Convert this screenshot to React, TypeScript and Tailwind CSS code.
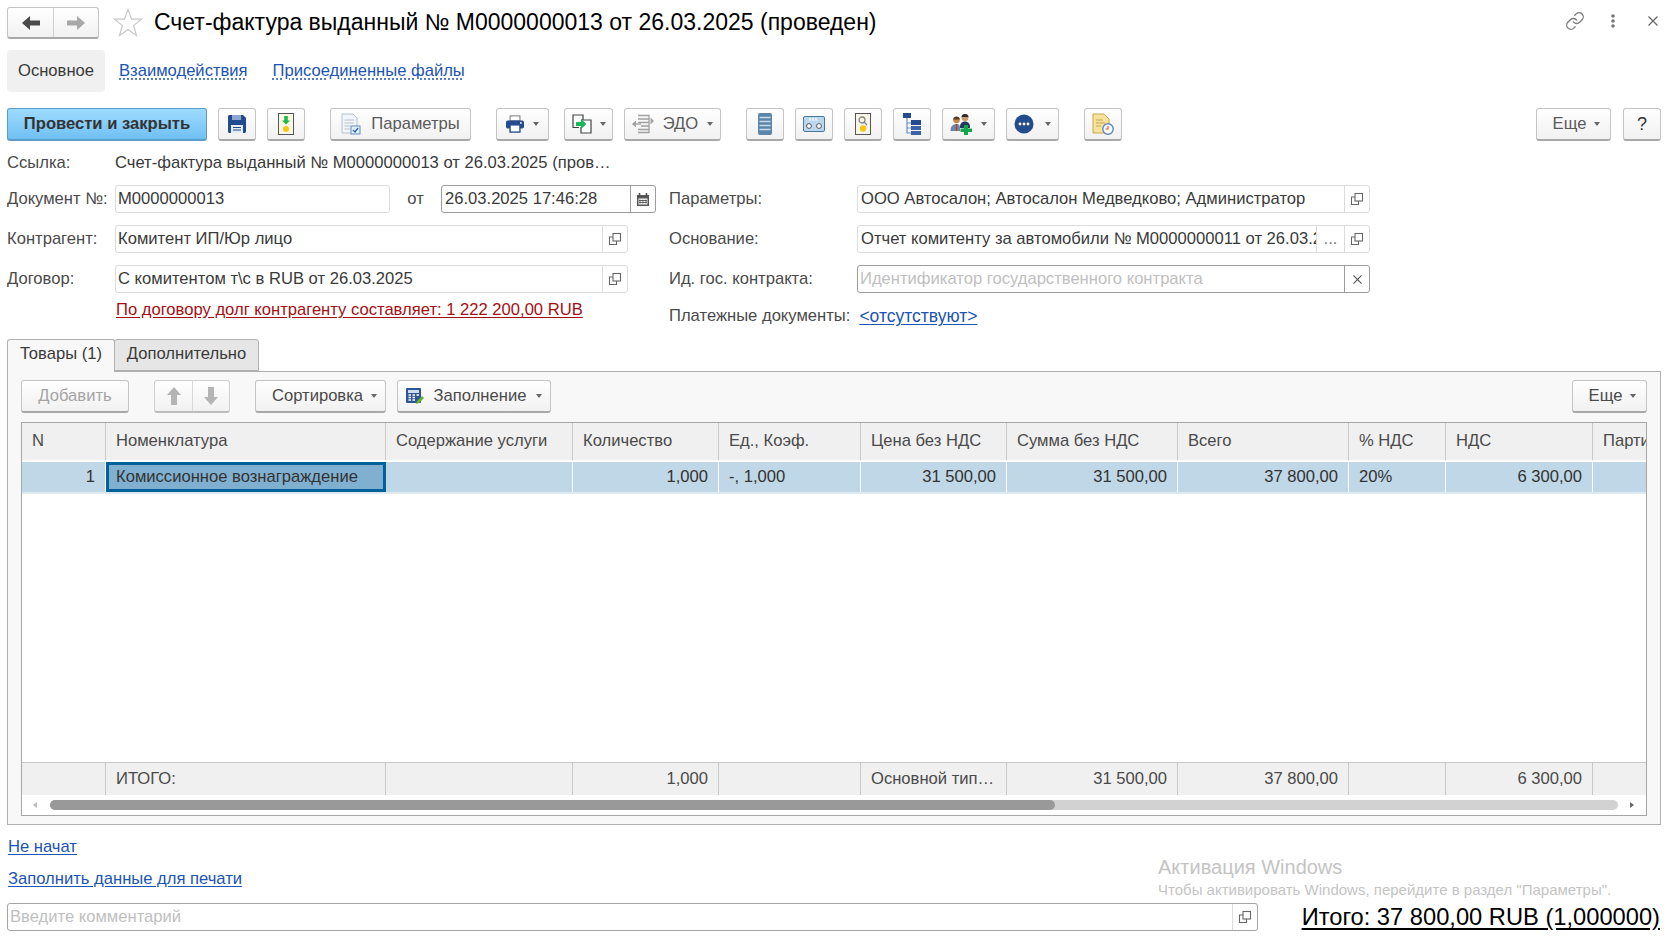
import React from "react";
import { Link as LinkIcon } from "lucide-react";

const Caret = () => (
  <svg viewBox="0 0 6 4" className="w-[6px] h-[4px] shrink-0">
    <path d="M0 0H6L3 4Z" fill="#666" />
  </svg>
);

const OpenIcon = () => (
  <svg viewBox="0 0 14 14" className="w-[14px] h-[14px]" fill="none" stroke="#666" strokeWidth="1.1">
    <rect x="5" y="1.5" width="7.5" height="7.5" />
    <path d="M5 5H1.5V12.5H8.5V9" />
  </svg>
);

const Btn = ({
  className = "",
  children,
  disabled,
}: {
  className?: string;
  children?: React.ReactNode;
  disabled?: boolean;
}) => (
  <div
    className={`h-[33px] shrink-0 flex items-center justify-center rounded-[3px] border border-[#c4c4c4] border-b-[#a8a8a8] border-b-2 bg-gradient-to-b from-white to-[#f1f1f1] ${
      disabled ? "text-[#a4a4a4]" : "text-[#4a4a4a]"
    } ${className}`}
  >
    {children}
  </div>
);

const Field = ({
  className = "",
  value,
  placeholder,
  focus,
  tight,
  children,
}: {
  className?: string;
  value?: string;
  placeholder?: string;
  focus?: boolean;
  tight?: boolean;
  children?: React.ReactNode;
}) => (
  <div
    className={`h-[28px] flex items-stretch rounded-[3px] border bg-white ${
      focus ? "border-[#9c9c9c]" : "border-[#dcdcdc]"
    } ${className}`}
  >
    <div
      className={`flex-1 min-w-0 leading-[26px] whitespace-nowrap overflow-hidden ${tight ? "px-[2px]" : "px-[3px]"} ${
        value ? "text-[#3a3a3a]" : "text-[#c0c0c0]"
      }`}
    >
      {value || placeholder}
    </div>
    {children}
  </div>
);

const FieldBtn = ({
  focus,
  className = "w-[25px]",
  children,
}: {
  focus?: boolean;
  className?: string;
  children: React.ReactNode;
}) => (
  <div
    className={`shrink-0 flex items-center justify-center border-l ${className} ${
      focus ? "border-[#9c9c9c]" : "border-[#dcdcdc]"
    }`}
  >
    {children}
  </div>
);

const Label = ({ className = "", children }: { className?: string; children: React.ReactNode }) => (
  <div className={`shrink-0 text-[#4a4a4a] whitespace-nowrap ${className}`}>{children}</div>
);

const Cell = ({
  w,
  children,
  right,
  divider,
}: {
  w: string;
  children?: React.ReactNode;
  right?: boolean;
  divider: string;
}) => (
  <div
    className={`${w} shrink-0 h-full flex items-center px-[10px] border-r whitespace-nowrap overflow-hidden ${divider} ${
      right ? "justify-end" : ""
    }`}
  >
    {children}
  </div>
);

const widths = [
  "w-[84px]",
  "w-[280px]",
  "w-[187px]",
  "w-[146px]",
  "w-[142px]",
  "w-[146px]",
  "w-[171px]",
  "w-[171px]",
  "w-[97px]",
  "w-[147px]",
  "w-[60px]",
];

export default function App() {
  return (
    <div className="w-[1671px] h-[943px] relative overflow-hidden bg-white px-[7px] font-['Liberation_Sans',Arial,sans-serif] text-[16.6px] text-[#4a4a4a]">
      {/* шапка */}
      <div className="h-[50px] flex items-start pt-[7px] pr-[6px]">
        <div className="w-[92px] h-[32px] flex rounded-[3px] border border-[#c4c4c4] border-b-2 border-b-[#a8a8a8] bg-gradient-to-b from-white to-[#f1f1f1]">
          <div className="w-[46px] flex items-center justify-center border-r border-[#cfcfcf]">
            <svg viewBox="0 0 18 14" className="w-[18px] h-[14px]">
              <path d="M0 7L8 0V4.5H18V9.5H8V14Z" fill="#4a4a4a" />
            </svg>
          </div>
          <div className="flex-1 flex items-center justify-center">
            <svg viewBox="0 0 18 14" className="w-[18px] h-[14px]">
              <path d="M18 7L10 0V4.5H0V9.5H10V14Z" fill="#a8a8a8" />
            </svg>
          </div>
        </div>
        <svg viewBox="0 0 30 30" className="w-[30px] h-[30px] ml-[14px] mt-[1px]" fill="#fff" stroke="#c8c8c8" strokeWidth="1.2">
          <path d="M15 1.5L18.6 11.2H28.6L20.6 17.4L23.5 27.5L15 21.6L6.5 27.5L9.4 17.4L1.4 11.2H11.4Z" />
        </svg>
        <div className="ml-[11px] text-[23px] leading-[30px] text-black whitespace-nowrap">
          Счет-фактура выданный № М0000000013 от 26.03.2025 (проведен)
        </div>
        <div className="ml-auto flex items-center pt-[4px]">
          <LinkIcon className="w-[20px] h-[20px] text-[#7c7c7c]" strokeWidth={1.6} />
          <svg viewBox="0 0 4 14" className="w-[4px] h-[14px] ml-[26px]" fill="#777">
            <circle cx="2" cy="2" r="1.8" />
            <circle cx="2" cy="7" r="1.8" />
            <circle cx="2" cy="12" r="1.8" />
          </svg>
          <svg viewBox="0 0 10 10" className="w-[10px] h-[10px] ml-[33px]" stroke="#666" strokeWidth="1.2">
            <path d="M0.5 0.5L9.5 9.5M9.5 0.5L0.5 9.5" />
          </svg>
        </div>
      </div>

      {/* разделы */}
      <div className="h-[42px] flex items-center">
        <div className="w-[98px] h-full pt-[1px] flex items-center justify-center rounded-[4px] bg-[#f0f0f0] text-[#3a3a3a]">
          Основное
        </div>
        <div className="ml-[14px] mt-[1px] text-[#1b54b5] underline decoration-dotted underline-offset-[3px]">Взаимодействия</div>
        <div className="ml-[25px] mt-[1px] text-[#1b54b5] underline decoration-dotted underline-offset-[3px]">Присоединенные файлы</div>
      </div>

      {/* командная панель */}
      <div className="mt-[16px] flex items-start">
        <div className="w-[200px] h-[33px] flex items-center justify-center rounded-[3px] border border-[#5b9cc8] border-b-2 bg-gradient-to-b from-[#9edbff] to-[#6fc0f2] font-bold text-[#333]">
          Провести и закрыть
        </div>
        <Btn className="w-[38px] ml-[11px]">
          <svg viewBox="0 0 18 18" className="w-[18px] h-[18px]">
            <path d="M0 1.5C0 .7.7 0 1.5 0H15L18 3V16.5C18 17.3 17.3 18 16.5 18H1.5C.7 18 0 17.3 0 16.5Z" fill="#234b8f" />
            <rect x="4" y="0" width="9" height="5" fill="#8fa8cf" />
            <rect x="3" y="10" width="12" height="8" fill="#e6ecf5" />
            <path d="M5 12.5H13M5 15H13" stroke="#234b8f" strokeWidth="1" />
          </svg>
        </Btn>
        <Btn className="w-[38px] ml-[11px]">
          <svg viewBox="0 0 16 22" className="w-[16px] h-[22px]">
            <rect x=".5" y=".5" width="15" height="21" fill="#fbf8e4" stroke="#555" />
            <path d="M6.2 3H9.8V7.5H12L8 11.5L4 7.5H6.2Z" fill="#1fb84a" />
            <circle cx="8" cy="16" r="3" fill="#f7c513" />
          </svg>
        </Btn>
        <Btn className="w-[141px] ml-[25px] gap-[10px] text-[#5a5a5a]">
          <svg viewBox="0 0 20 22" className="w-[20px] h-[22px]">
            <path d="M1 1H12L16 5V20H1Z" fill="#f2f5f9" stroke="#b4c0cd" />
            <path d="M3.5 7H13M3.5 10H13M3.5 13H9M3.5 16H9" stroke="#b4c0cd" />
            <rect x="10" y="13" width="9" height="8" fill="#e3eef9" stroke="#5f8fc2" />
            <path d="M12 17L14 19L17 15" fill="none" stroke="#2a67b0" strokeWidth="1.4" />
          </svg>
          <span>Параметры</span>
        </Btn>
        <Btn className="w-[53px] ml-[25px] gap-[9px]">
          <svg viewBox="0 0 20 20" className="w-[18px] h-[18px]">
            <rect x="4.5" y="1" width="11" height="5.5" fill="#fff" stroke="#6d6d6d" />
            <rect x="0" y="6" width="20" height="9" rx="2" fill="#234b8f" />
            <rect x="4.5" y="11" width="11" height="8" fill="#fff" stroke="#234b8f" strokeWidth="1.5" />
            <circle cx="16.5" cy="8.8" r="1" fill="#fff" />
          </svg>
          <Caret />
        </Btn>
        <Btn className="w-[49px] ml-[15px] gap-[8px]">
          <svg viewBox="0 0 20 20" className="w-[20px] h-[20px]">
            <path d="M7 13.5H1V1H11V6" fill="none" stroke="#444" strokeWidth="1.2" />
            <path d="M9 6H19V19H9V13" fill="#fff" stroke="#444" strokeWidth="1.2" />
            <path d="M4 8H9V5L14.5 10L9 15V12H4Z" fill="#17b85a" />
          </svg>
          <Caret />
        </Btn>
        <Btn className="w-[97px] ml-[11px] gap-[9px] text-[#5a5a5a]">
          <svg viewBox="0 0 22 20" className="w-[22px] h-[20px]" fill="none" stroke="#a0a0a0" strokeWidth="1.3">
            <path d="M6 1.5H17V18.5H6" />
            <path d="M6 5H17M6 8.5H17M9 12H17M6 15.5H17" />
            <path d="M0 10L4 6.5V13.5Z" fill="#a0a0a0" stroke="none" />
            <path d="M4 10H9" />
            <path d="M22 7L18.5 3.5V10.5Z" fill="#a0a0a0" stroke="none" />
          </svg>
          <span>ЭДО</span>
          <Caret />
        </Btn>
        <Btn className="w-[38px] ml-[25px]">
          <svg viewBox="0 0 14 22" className="w-[14px] h-[22px]">
            <rect x="0" y="0" width="14" height="22" rx="2" fill="#5b86a8" />
            <path d="M1.5 4.5H12.5M1.5 8.5H12.5M1.5 12.5H12.5M1.5 16.5H12.5" stroke="#c9dcea" strokeWidth="1.6" />
          </svg>
        </Btn>
        <Btn className="w-[38px] ml-[11px]">
          <svg viewBox="0 0 22 16" className="w-[22px] h-[16px]">
            <rect x=".5" y=".5" width="21" height="15" rx="1.5" fill="#bcd8ef" stroke="#4d7796" />
            <circle cx="6" cy="10" r="2.4" fill="#fff" stroke="#555" />
            <circle cx="16" cy="10" r="2.4" fill="#fff" stroke="#555" />
            <path d="M7 2V5M10 2V5M13 2V5" stroke="#fff" strokeWidth="1.2" />
          </svg>
        </Btn>
        <Btn className="w-[38px] ml-[11px]">
          <svg viewBox="0 0 16 22" className="w-[16px] h-[22px]">
            <rect x=".5" y=".5" width="15" height="21" fill="#f7f5ea" stroke="#555" />
            <circle cx="7" cy="7" r="3" fill="none" stroke="#888" strokeWidth="1.3" />
            <path d="M9 9L12 12" stroke="#888" strokeWidth="1.3" />
            <circle cx="8" cy="15.5" r="3.2" fill="#f7c513" />
          </svg>
        </Btn>
        <Btn className="w-[38px] ml-[11px]">
          <svg viewBox="0 0 18 22" className="w-[18px] h-[22px]">
            <rect x="0" y="0" width="8" height="5" fill="#234b8f" />
            <path d="M4 5V20H8M4 10H8M4 15H8" fill="none" stroke="#6d8fc0" strokeWidth="1.2" />
            <rect x="8" y="7" width="10" height="5" fill="#234b8f" />
            <rect x="8" y="13" width="10" height="4" fill="#3b63a6" />
            <rect x="8" y="18" width="10" height="4" fill="#3b63a6" />
          </svg>
        </Btn>
        <Btn className="w-[53px] ml-[11px] gap-[7px]">
          <svg viewBox="0 0 24 22" className="w-[24px] h-[22px]">
            <circle cx="6.5" cy="7" r="3.3" fill="#c68a4a" />
            <path d="M3.2 6.5C3.2 4.5 5 3.4 6.5 3.4S9.8 4.5 9.8 6.5Z" fill="#5a3a20" />
            <path d="M0.5 18C0.5 13 3 11 6.5 11S10 13 10 18Z" fill="#6d86a8" />
            <path d="M6.5 11V18" stroke="#c0392b" strokeWidth="1.2" />
            <circle cx="15" cy="4.5" r="3.5" fill="#c99a6a" />
            <path d="M11.5 4C11.5 2 13.2 1 15 1S18.5 2 18.5 4Z" fill="#2b2b2b" />
            <path d="M10 14C10 10 12.5 8.5 15 8.5S20 10 20 14V15H10Z" fill="#25395c" />
            <path d="M14 12H18V15.5H22V19H18V22H14V19H10.5V15.5H14Z" fill="#12a64d" />
          </svg>
          <Caret />
        </Btn>
        <Btn className="w-[53px] ml-[11px] gap-[11px]">
          <svg viewBox="0 0 20 20" className="w-[20px] h-[20px]">
            <circle cx="10" cy="10" r="9.5" fill="#234b8f" />
            <circle cx="6" cy="10" r="1.4" fill="#fff" />
            <circle cx="10" cy="10" r="1.4" fill="#fff" />
            <circle cx="14" cy="10" r="1.4" fill="#fff" />
          </svg>
          <Caret />
        </Btn>
        <Btn className="w-[38px] ml-[25px]">
          <svg viewBox="0 0 22 22" className="w-[22px] h-[22px]">
            <path d="M1 1H12L17 6V20H1Z" fill="#f6e29a" stroke="#c7a84e" />
            <path d="M4 7H11M4 10H13M4 13H9" stroke="#c7a84e" />
            <circle cx="16" cy="16" r="5.2" fill="#fff" stroke="#5d87b8" strokeWidth="1.4" />
            <path d="M16 13V16H13.5" fill="none" stroke="#d8574a" strokeWidth="1.2" />
          </svg>
        </Btn>
        <Btn className="w-[75px] ml-auto gap-[8px] pl-[6px] text-[#5a5a5a]">
          <span>Еще</span>
          <Caret />
        </Btn>
        <Btn className="w-[38px] ml-[12px] mr-[3px] text-[18px] text-[#333]">?</Btn>
      </div>

      {/* реквизиты */}
      <div className="mt-[11px] h-[22px] flex items-center">
        <Label className="w-[108px]">Ссылка:</Label>
        <div className="text-[#3a3a3a] whitespace-nowrap">Счет-фактура выданный № М0000000013 от 26.03.2025 (пров…</div>
      </div>
      <div className="mt-[11px] flex">
        <div className="w-[662px] shrink-0 flex flex-col gap-[12px]">
          <div className="flex items-center">
            <Label className="w-[108px]">Документ №:</Label>
            <Field className="w-[275px]" tight value="М0000000013" />
            <div className="w-[51px] text-center text-[#4a4a4a]">от</div>
            <Field className="w-[215px]" focus value="26.03.2025 17:46:28">
              <FieldBtn focus>
                <svg viewBox="0 0 12 13" className="w-[12px] h-[13px]">
                  <path d="M0 2H12V13H0Z" fill="#555" />
                  <path d="M2.5 0V3M9.5 0V3" stroke="#555" strokeWidth="1.6" />
                  <path d="M1.5 5.5H10.5V11.5H1.5Z" fill="#fff" />
                  <path d="M3 6.5V10.5M6 6.5V10.5M9 6.5V10.5M2 7.5H10M2 9.5H10" stroke="#555" strokeWidth=".9" />
                </svg>
              </FieldBtn>
            </Field>
          </div>
          <div className="flex items-center">
            <Label className="w-[108px]">Контрагент:</Label>
            <Field className="w-[513px]" tight value="Комитент ИП/Юр лицо">
              <FieldBtn>
                <OpenIcon />
              </FieldBtn>
            </Field>
          </div>
          <div className="flex items-center">
            <Label className="w-[108px]">Договор:</Label>
            <Field className="w-[513px]" tight value="С комитентом т\с в RUB от 26.03.2025">
              <FieldBtn>
                <OpenIcon />
              </FieldBtn>
            </Field>
          </div>
          <div className="ml-[109px] -mt-[5px] text-[#a50f12] underline underline-offset-2 leading-[20px] whitespace-nowrap">
            По договору долг контрагенту составляет: 1 222 200,00 RUB
          </div>
        </div>
        <div className="flex flex-col gap-[12px]">
          <div className="flex items-center">
            <Label className="w-[188px]">Параметры:</Label>
            <Field className="w-[513px]" value="ООО Автосалон; Автосалон Медведково; Администратор">
              <FieldBtn>
                <OpenIcon />
              </FieldBtn>
            </Field>
          </div>
          <div className="flex items-center">
            <Label className="w-[188px]">Основание:</Label>
            <Field className="w-[513px]" value="Отчет комитенту за автомобили № М0000000011 от 26.03.2025">
              <FieldBtn className="w-[28px]">
                <span className="text-[#777]">...</span>
              </FieldBtn>
              <FieldBtn>
                <OpenIcon />
              </FieldBtn>
            </Field>
          </div>
          <div className="flex items-center">
            <Label className="w-[188px]">Ид. гос. контракта:</Label>
            <Field className="w-[513px]" focus tight placeholder="Идентификатор государственного контракта">
              <FieldBtn focus>
                <svg viewBox="0 0 10 10" className="w-[9px] h-[9px]" stroke="#555" strokeWidth="1.3">
                  <path d="M0.5 0.5L9.5 9.5M9.5 0.5L0.5 9.5" />
                </svg>
              </FieldBtn>
            </Field>
          </div>
          <div className="flex items-center leading-[22px]">
            <Label>Платежные документы:</Label>
            <div className="ml-[9px] text-[17.5px] text-[#1b54b5] underline underline-offset-2">&lt;отсутствуют&gt;</div>
          </div>
        </div>
      </div>

      {/* закладки */}
      <div className="mt-[12px] h-[32px] flex relative z-10">
        <div className="w-[108px] h-[33px] pb-[3px] flex items-center justify-center rounded-t-[3px] border border-b-0 border-[#b0b0b0] bg-[#f8f8f8] text-[#3a3a3a]">
          Товары (1)
        </div>
        <div className="w-[145px] h-[32px] pb-[2px] -ml-px flex items-center justify-center rounded-t-[3px] border border-[#b0b0b0] bg-[#e6e6e6] text-[#3a3a3a]">
          Дополнительно
        </div>
      </div>
      <div className="w-[1654px] h-[454px] flex flex-col border border-[#b0b0b0] bg-[#f8f8f8] px-[13px] pt-[8px]">
        <div className="flex items-start">
          <Btn disabled className="w-[108px]">Добавить</Btn>
          <div className="w-[76px] h-[33px] ml-[25px] flex rounded-[3px] border border-[#d0d0d0] border-b-2 border-b-[#bcbcbc] bg-gradient-to-b from-white to-[#f1f1f1]">
            <div className="w-[38px] flex items-center justify-center border-r border-[#d8d8d8]">
              <svg viewBox="0 0 14 18" className="w-[14px] h-[18px]">
                <path d="M7 0L14 8H10V18H4V8H0Z" fill="#b4b4b4" />
              </svg>
            </div>
            <div className="flex-1 flex items-center justify-center">
              <svg viewBox="0 0 14 18" className="w-[14px] h-[18px]">
                <path d="M7 18L14 10H10V0H4V10H0Z" fill="#b4b4b4" />
              </svg>
            </div>
          </div>
          <Btn className="w-[131px] ml-[25px] gap-[8px] pl-[8px]">
            <span>Сортировка</span>
            <Caret />
          </Btn>
          <Btn className="w-[154px] ml-[11px] gap-[10px]">
            <svg viewBox="0 0 18 18" className="w-[18px] h-[18px]">
              <rect x="0" y="1" width="15" height="15" rx="1" fill="#2f5597" />
              <rect x="2" y="3" width="11" height="3" fill="#cfe0f5" />
              <path d="M2.5 8H5M6.5 8H9M10.5 8H13M2.5 10.5H5M6.5 10.5H9M2.5 13H5M6.5 13H9" stroke="#fff" strokeWidth="1.3" />
              <path d="M10 17L11 14L16 9L18 11L13 16Z" fill="#63b32e" />
            </svg>
            <span>Заполнение</span>
            <Caret />
          </Btn>
          <Btn className="w-[75px] ml-auto gap-[8px] pl-[6px]">
            <span>Еще</span>
            <Caret />
          </Btn>
        </div>
        <div className="mt-[9px] w-[1626px] h-[394px] flex flex-col border border-[#a6a6a6] bg-white overflow-hidden text-[#4a4a4a]">
          <div className="h-[39px] shrink-0 flex bg-[#f0f0f0] border-b-2 border-white">
            {["N", "Номенклатура", "Содержание услуги", "Количество", "Ед., Коэф.", "Цена без НДС", "Сумма без НДС", "Всего", "% НДС", "НДС", "Партия"].map((t, i) => (
              <Cell key={t} w={widths[i]} divider="border-[#c8c8c8]">
                {t}
              </Cell>
            ))}
          </div>
          <div className="h-[32px] shrink-0 flex bg-[#bfd7e6] border-b-2 border-[#dfe9f0] text-[#333]">
            <Cell w={widths[0]} right divider="border-white">1</Cell>
            <div className="w-[280px] shrink-0 h-full flex items-center px-[7px] bg-[#7fb0d0] border-[3px] border-[#00609a] whitespace-nowrap">
              Комиссионное вознаграждение
            </div>
            <Cell w={widths[2]} divider="border-white" />
            <Cell w={widths[3]} right divider="border-white">1,000</Cell>
            <Cell w={widths[4]} divider="border-white">-, 1,000</Cell>
            <Cell w={widths[5]} right divider="border-white">31 500,00</Cell>
            <Cell w={widths[6]} right divider="border-white">31 500,00</Cell>
            <Cell w={widths[7]} right divider="border-white">37 800,00</Cell>
            <Cell w={widths[8]} divider="border-white">20%</Cell>
            <Cell w={widths[9]} right divider="border-white">6 300,00</Cell>
            <Cell w={widths[10]} divider="border-white" />
          </div>
          <div className="flex-1" />
          <div className="h-[33px] shrink-0 flex bg-[#f0f0f0] border-t border-[#c8c8c8]">
            <Cell w={widths[0]} divider="border-[#c8c8c8]" />
            <Cell w={widths[1]} divider="border-[#c8c8c8]">ИТОГО:</Cell>
            <Cell w={widths[2]} divider="border-[#c8c8c8]" />
            <Cell w={widths[3]} right divider="border-[#c8c8c8]">1,000</Cell>
            <Cell w={widths[4]} divider="border-[#c8c8c8]" />
            <Cell w={widths[5]} divider="border-[#c8c8c8]">Основной тип…</Cell>
            <Cell w={widths[6]} right divider="border-[#c8c8c8]">31 500,00</Cell>
            <Cell w={widths[7]} right divider="border-[#c8c8c8]">37 800,00</Cell>
            <Cell w={widths[8]} divider="border-[#c8c8c8]" />
            <Cell w={widths[9]} right divider="border-[#c8c8c8]">6 300,00</Cell>
            <Cell w={widths[10]} divider="border-[#c8c8c8]" />
          </div>
          <div className="h-[20px] shrink-0 flex items-center bg-white">
            <svg viewBox="0 0 4 6" className="w-[4px] h-[6px] ml-[11px]">
              <path d="M4 0V6L0 3Z" fill="#bbb" />
            </svg>
            <div className="w-[1568px] h-[10px] ml-[13px] rounded-full bg-[#d2d2d2]">
              <div className="w-[1005px] h-full rounded-full bg-[#999]" />
            </div>
            <svg viewBox="0 0 4 6" className="w-[4px] h-[6px] ml-[12px]">
              <path d="M0 0V6L4 3Z" fill="#666" />
            </svg>
          </div>
        </div>
      </div>

      {/* подвал */}
      <div className="mt-[11px] h-[22px] leading-[22px] text-[#1b54b5] underline underline-offset-2 pl-px">Не начат</div>
      <div className="mt-[10px] h-[22px] leading-[22px] text-[#1b54b5] underline underline-offset-2 pl-px">Заполнить данные для печати</div>
      <div className="mt-[13px] flex items-center">
        <Field className="w-[1251px] border-[#a4a4a4]" focus tight placeholder="Введите комментарий">
          <FieldBtn>
            <OpenIcon />
          </FieldBtn>
        </Field>
        <div className="ml-auto mr-[4px] text-[23.7px] leading-[28px] text-black underline underline-offset-[3px] whitespace-nowrap">
          Итого: 37 800,00 RUB (1,000000)
        </div>
      </div>

      {/* водяной знак */}
      <div className="absolute left-[1158px] top-[854px] pointer-events-none text-[#c4c4c4] whitespace-nowrap">
        <div className="text-[20px] leading-[26px]">Активация Windows</div>
        <div className="text-[15px] leading-[20px]">Чтобы активировать Windows, перейдите в раздел "Параметры".</div>
      </div>
    </div>
  );
}
